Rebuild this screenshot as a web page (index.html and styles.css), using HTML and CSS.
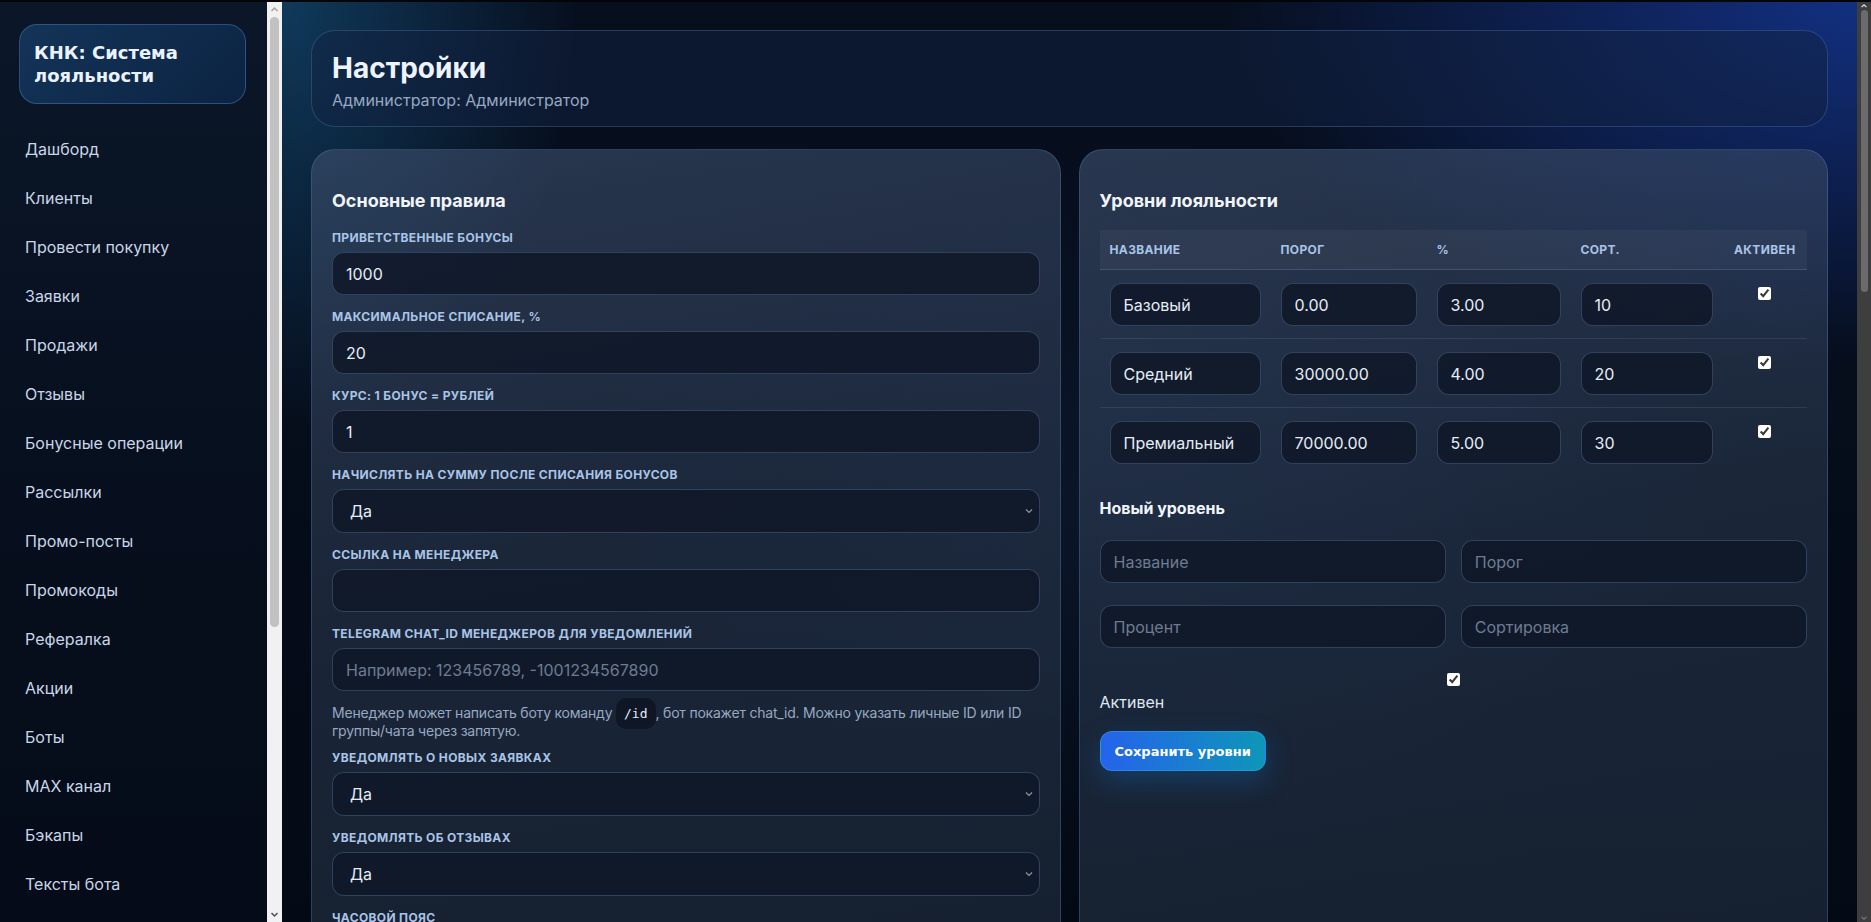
FILE: index.html
```html
<!DOCTYPE html>
<html lang="ru">
<head>
    <meta charset="UTF-8">
    <meta name="viewport" content="width=device-width, initial-scale=1.0">
    <title>Настройки — КНК</title>
    <link rel="stylesheet" href="styles.css">
</head>
<body>
    <aside class="sidebar">
        <div class="brand">КНК: Система лояльности</div>
        <nav class="nav">
            <a href="#">Дашборд</a>
            <a href="#">Клиенты</a>
            <a href="#">Провести покупку</a>
            <a href="#">Заявки</a>
            <a href="#">Продажи</a>
            <a href="#">Отзывы</a>
            <a href="#">Бонусные операции</a>
            <a href="#">Рассылки</a>
            <a href="#">Промо-посты</a>
            <a href="#">Промокоды</a>
            <a href="#">Рефералка</a>
            <a href="#">Акции</a>
            <a href="#">Боты</a>
            <a href="#">MAX канал</a>
            <a href="#">Бэкапы</a>
            <a href="#">Тексты бота</a>
            <a href="#" class="active">Настройки</a>
            <a href="#">Пользователи</a>
            <a href="#">Журнал действий</a>
            <a href="#">Выход</a>
        </nav>
    </aside>

    <!-- sidebar scroll rail -->
    <div class="scroll-track light">
        <svg class="arrow up" viewBox="0 0 15 15"><path d="M4.5 9 7.5 6 10.5 9"/></svg>
        <div class="rail"><span class="thumb" style="height: 610px"></span></div>
        <svg class="arrow down" viewBox="0 0 15 15"><path d="M4.5 6 7.5 9 10.5 6"/></svg>
    </div>

    <main class="main">
        <header class="page-head">
            <h1>Настройки</h1>
            <p>Администратор: Администратор</p>
        </header>

        <div class="grid">
            <section class="card">
                <h3>Основные правила</h3>

                <div class="field">
                    <label>Приветственные бонусы</label>
                    <input type="text" value="1000">
                </div>
                <div class="field">
                    <label>Максимальное списание, %</label>
                    <input type="text" value="20">
                </div>
                <div class="field">
                    <label>Курс: 1 бонус = рублей</label>
                    <input type="text" value="1">
                </div>
                <div class="field">
                    <label>Начислять на сумму после списания бонусов</label>
                    <select><option>Да</option><option>Нет</option></select>
                </div>
                <div class="field">
                    <label>Ссылка на менеджера</label>
                    <input type="text">
                </div>
                <div class="field has-hint">
                    <label>Telegram chat_id менеджеров для уведомлений</label>
                    <input type="text" placeholder="Например: 123456789, -1001234567890">
                    <p class="hint">Менеджер может написать боту команду <code>/id</code>, бот покажет chat_id. Можно указать личные ID или ID группы/чата через запятую.</p>
                </div>
                <div class="field">
                    <label>Уведомлять о новых заявках</label>
                    <select><option>Да</option><option>Нет</option></select>
                </div>
                <div class="field">
                    <label>Уведомлять об отзывах</label>
                    <select><option>Да</option><option>Нет</option></select>
                </div>
                <div class="field">
                    <label>Часовой пояс</label>
                    <select><option>Europe/Moscow (UTC+3)</option></select>
                </div>
                <div class="field">
                    <label>Срок действия бонусов, дней</label>
                    <input type="text" value="365">
                </div>
                <button class="btn" type="button">Сохранить настройки</button>
            </section>

            <section class="card">
                <h3>Уровни лояльности</h3>

                <table class="levels">
                    <thead>
                        <tr>
                            <th class="col-name">Название</th>
                            <th class="col-min">Порог</th>
                            <th class="col-pct">%</th>
                            <th class="col-sort">Сорт.</th>
                            <th class="col-on">Активен</th>
                        </tr>
                    </thead>
                    <tbody>
                        <tr>
                            <td><input type="text" value="Базовый"></td>
                            <td><input type="text" value="0.00"></td>
                            <td><input type="text" value="3.00"></td>
                            <td><input type="text" value="10"></td>
                            <td class="col-on"><input type="checkbox" checked></td>
                        </tr>
                        <tr>
                            <td><input type="text" value="Средний"></td>
                            <td><input type="text" value="30000.00"></td>
                            <td><input type="text" value="4.00"></td>
                            <td><input type="text" value="20"></td>
                            <td class="col-on"><input type="checkbox" checked></td>
                        </tr>
                        <tr>
                            <td><input type="text" value="Премиальный"></td>
                            <td><input type="text" value="70000.00"></td>
                            <td><input type="text" value="5.00"></td>
                            <td><input type="text" value="30"></td>
                            <td class="col-on"><input type="checkbox" checked></td>
                        </tr>
                    </tbody>
                </table>

                <h4>Новый уровень</h4>
                <div class="new-level">
                    <input type="text" placeholder="Название">
                    <input type="text" placeholder="Порог">
                    <input type="text" placeholder="Процент">
                    <input type="text" placeholder="Сортировка">
                    <label class="check"><input type="checkbox" checked>Активен</label>
                </div>
                <button class="btn" type="button">Сохранить уровни</button>
            </section>
        </div>
    </main>

    <!-- page scroll rail -->
    <div class="scroll-track dark">
        <svg class="arrow up" viewBox="0 0 14 10"><path d="M4 6.5 7 3.5 10 6.5"/></svg>
        <div class="rail"><span class="thumb" style="height: 282px"></span></div>
        <svg class="arrow down" viewBox="0 0 14 10"><path d="M4 3.5 7 6.5 10 3.5"/></svg>
    </div>
</body>
</html>
```

FILE: styles.css
```css
* {
    box-sizing: border-box;
}

body {
    margin: 0;
    height: 100vh;
    overflow: hidden;
    display: flex;
    border-top: 2px solid #030508;
    font-family: Inter, "Noto Sans", sans-serif;
    color: #e2e8f0;
    background: #050b17;
}

/* sidebar */
.sidebar {
    width: 267px;
    flex-shrink: 0;
    overflow: hidden;
    padding: 22px 21px 24px 19px;
    background: linear-gradient(180deg, #0b1729 0%, #07101f 45%, #050b18 100%);
}

.brand {
    padding: 16px 14px;
    border: 1px solid rgba(80, 130, 190, 0.45);
    border-radius: 18px;
    background: linear-gradient(135deg, #133458, #0c2342);
    font-family: "DejaVu Sans", sans-serif;
    font-weight: 700;
    font-size: 18px;
    line-height: 23px;
    color: #eaf2ff;
    margin-bottom: 21px;
}

.nav a {
    display: block;
    padding: 15px 6px;
    font-size: 16px;
    line-height: 19px;
    color: #c9d6e8;
    text-decoration: none;
}

/* scroll rails */
.scroll-track {
    display: flex;
    flex-direction: column;
    flex-shrink: 0;
}

.scroll-track .rail {
    flex: 1;
}

.scroll-track .thumb {
    display: block;
}

.scroll-track .arrow {
    display: block;
    fill: none;
    stroke-width: 1.5;
}

.scroll-track.light {
    width: 15px;
    background: #f1f1f1;
}

.scroll-track.light .arrow {
    width: 15px;
    height: 15px;
}

.scroll-track.light .up { stroke: #a3a3a3; }
.scroll-track.light .down { stroke: #505050; }

.scroll-track.light .rail {
    padding: 0 3px;
}

.scroll-track.light .thumb {
    border-radius: 5px;
    background: #c1c1c1;
}

.scroll-track.dark {
    width: 14px;
    background: #3e3e3e;
}

.scroll-track.dark .arrow {
    width: 14px;
    height: 8px;
}

.scroll-track.dark .up { stroke: #e6e6e6; }
.scroll-track.dark .down { stroke: #7a7a7a; }

.scroll-track.dark .rail {
    padding: 0 3px 0 4px;
}

.scroll-track.dark .thumb {
    border-radius: 4px;
    background: #6b6b6b;
}

/* main */
.main {
    flex: 1;
    min-width: 0;
    overflow: hidden;
    padding: 28px 29px;
    background:
        radial-gradient(900px 520px at 100% 0%, rgba(29, 78, 216, 0.52), transparent 70%),
        radial-gradient(420px 620px at 0% 0%, rgba(24, 100, 150, 0.5), transparent 70%),
        radial-gradient(800px 500px at 55% 55%, rgba(30, 58, 100, 0.22), transparent 70%),
        linear-gradient(180deg, #070f1f, #040a15);
}

.page-head {
    padding: 20px 20px 16px;
    border: 1px solid rgba(90, 125, 180, 0.35);
    border-radius: 24px;
    background: rgba(18, 34, 66, 0.5);
    margin-bottom: 22px;
}

.page-head h1 {
    margin: 0 0 6px;
    font-size: 28px;
    line-height: 34px;
    font-weight: 700;
    color: #eef4ff;
}

.page-head p {
    margin: 0;
    font-size: 16px;
    line-height: 19px;
    color: #97a8c0;
}

.grid {
    display: grid;
    grid-template-columns: 1fr 1fr;
    gap: 18px;
}

.card {
    padding: 20px;
    border: 1px solid rgba(100, 135, 185, 0.32);
    border-radius: 24px;
    background:
        linear-gradient(170deg, rgba(60, 78, 108, 0.64) 0%, rgba(42, 57, 80, 0.58) 40%, rgba(30, 43, 60, 0.64) 100%);
}

.card h3 {
    margin: 20px 0 18px;
    font-size: 18px;
    line-height: 22px;
    font-weight: 700;
    color: #f1f5fb;
}

.card h4 {
    margin: 22px 0 22px;
    font-size: 16px;
    line-height: 20px;
    font-weight: 700;
    color: #f1f5fb;
}

.field {
    margin-bottom: 14px;
}

.field.has-hint {
    margin-bottom: 11px;
}

.field label {
    display: block;
    margin-bottom: 7px;
    font-size: 12px;
    line-height: 15px;
    font-weight: 700;
    text-transform: uppercase;
    letter-spacing: 0.03em;
    color: #a9c4e6;
}

input[type="text"],
select {
    width: 100%;
    height: 43px;
    padding: 0 13px;
    border: 1px solid rgba(70, 92, 125, 0.6);
    border-radius: 12px;
    background-color: rgba(15, 23, 40, 0.85);
    color: #e6edf7;
    font-family: inherit;
    font-size: 16px;
    outline: none;
}

select {
    height: 44px;
    padding-left: 17px;
    appearance: none;
    background-image: url("data:image/svg+xml,%3Csvg xmlns='http://www.w3.org/2000/svg' viewBox='0 0 10 10'%3E%3Cpath d='M2 3.5 5 6.5 8 3.5' fill='none' stroke='%238a95a6' stroke-width='1.2'/%3E%3C/svg%3E");
    background-repeat: no-repeat;
    background-position: right 5px center;
    background-size: 10px 10px;
}

input::placeholder {
    color: #6e7c91;
}

.hint {
    margin: 13px 0 0;
    font-size: 14px;
    line-height: 17px;
    letter-spacing: -0.015em;
    color: #97a8c0;
}

.hint code {
    padding: 8px;
    border-radius: 10px;
    background: #0f1727;
    color: #e6edf7;
    font-family: "DejaVu Sans Mono", monospace;
    font-size: 13px;
    letter-spacing: 0;
}

/* levels table */
.levels {
    width: 100%;
    border-collapse: collapse;
}

.levels th {
    padding: 12px 10px;
    text-align: left;
    font-size: 12px;
    line-height: 15px;
    font-weight: 700;
    text-transform: uppercase;
    letter-spacing: 0.03em;
    color: #a9c4e6;
    background: rgba(255, 255, 255, 0.045);
    border-bottom: 1px solid rgba(120, 150, 190, 0.25);
}

.levels td {
    padding: 13px 10px 12px;
    vertical-align: top;
    border-bottom: 1px solid rgba(120, 150, 190, 0.18);
}

.levels tbody tr:last-child td {
    border-bottom: none;
}

.levels .col-name { width: 171px; }
.levels .col-min { width: 156px; }
.levels .col-pct { width: 144px; }
.levels .col-sort { width: 152px; }
.levels .col-on { text-align: center; }

input[type="checkbox"] {
    accent-color: #ffffff;
    margin: 4px 0 0;
}

.new-level {
    display: grid;
    grid-template-columns: 1fr 1fr;
    gap: 22px 15px;
}

.check {
    grid-column: 1 / -1;
    font-size: 16px;
    line-height: 26px;
    color: #dfe6f0;
}

.check input {
    display: block;
    width: 100%;
    margin: 3px 0;
}

.btn {
    margin-top: 16px;
    height: 40px;
    padding: 0 14px;
    border: 1px solid rgba(56, 170, 230, 0.45);
    border-radius: 12px;
    background: linear-gradient(90deg, #2563eb, #0e96b8);
    color: #fff;
    font-family: "DejaVu Sans", sans-serif;
    font-weight: 700;
    font-size: 13px;
    cursor: pointer;
    box-shadow: 0 10px 28px rgba(14, 116, 200, 0.32);
}
```
